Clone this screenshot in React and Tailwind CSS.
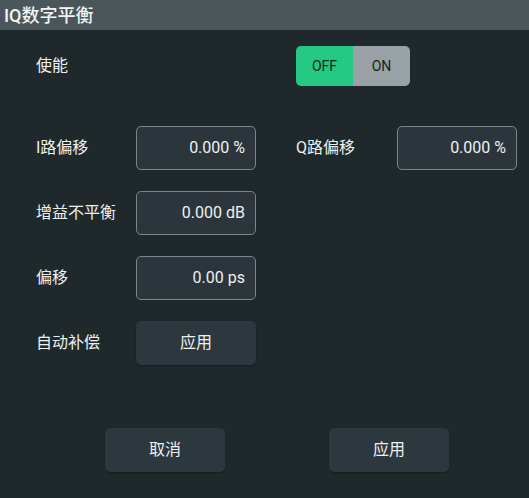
const font = { fontFamily: '"Roboto", "Noto Sans CJK SC", sans-serif' };

const Field = ({ value }) => (
  <div className="flex h-[44px] w-[120px] items-center justify-end rounded-[5px] border border-[#7b8489] bg-[#2c353b] pr-[10px] text-[16px] text-[#eef1f2]">
    {value}
  </div>
);

const Button = ({ children, className = "" }) => (
  <button
    type="button"
    className={`flex h-[44px] w-[120px] items-center justify-center rounded-[5px] bg-[#2d373e] text-[16px] text-[#eef1f2] shadow-[0_1px_2px_rgba(0,0,0,0.35)] ${className}`}
  >
    {children}
  </button>
);

export default function App() {
  return (
    <div className="flex h-[498px] w-[529px] flex-col bg-[#1f292c] text-[#eef1f2]" style={font}>
      <div className="flex h-[30px] items-center bg-[#4b565b] pl-[4px] text-[18px] font-medium text-[#f2f4f4]">IQ数字平衡</div>

      <div className="flex flex-col pl-[36px]">
        <div className="mt-[16px] flex h-[40px] items-center">
          <span className="w-[260px] text-[16px]">使能</span>
          <div className="flex h-[40px] w-[114px] overflow-hidden rounded-[5px] text-[14px] text-[#16241d]">
            <div className="flex w-[57px] items-center justify-center bg-[#23c883]">OFF</div>
            <div className="flex w-[57px] items-center justify-center bg-[#98a1a5]">ON</div>
          </div>
        </div>

        <div className="mt-[40px] flex items-center">
          <span className="w-[100px] text-[16px]">I路偏移</span>
          <Field value="0.000 %" />
          <span className="ml-[40px] w-[101px] text-[16px]">Q路偏移</span>
          <Field value="0.000 %" />
        </div>

        <div className="mt-[21px] flex items-center">
          <span className="w-[100px] text-[16px]">增益不平衡</span>
          <Field value="0.000 dB" />
        </div>

        <div className="mt-[21px] flex items-center">
          <span className="w-[100px] text-[16px]">偏移</span>
          <Field value="0.00 ps" />
        </div>

        <div className="mt-[21px] flex items-center">
          <span className="w-[100px] text-[16px]">自动补偿</span>
          <Button>应用</Button>
        </div>
      </div>

      <div className="mt-[63px] flex pl-[105px]">
        <Button>取消</Button>
        <Button className="ml-[104px]">应用</Button>
      </div>
    </div>
  );
}
